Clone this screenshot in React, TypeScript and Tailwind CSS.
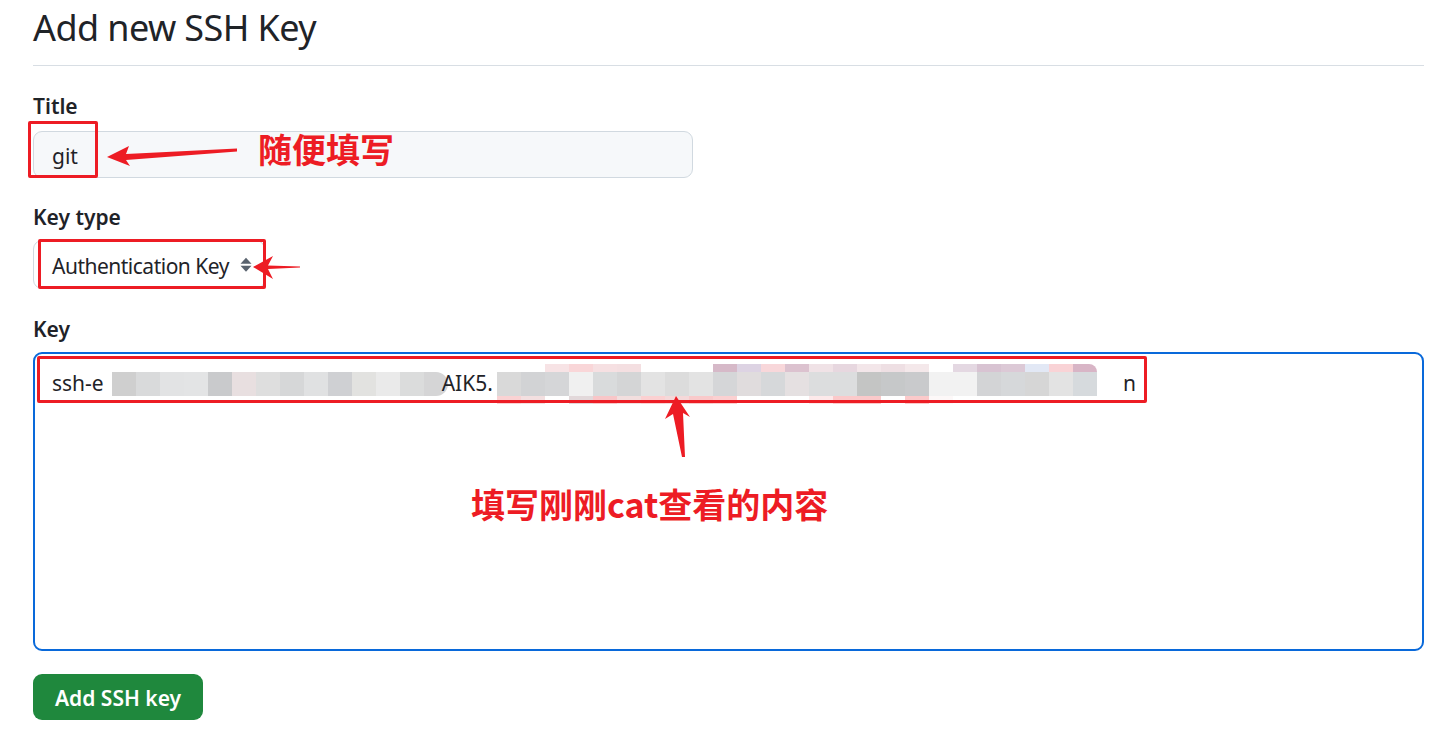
import React from "react";

const seg1 = [
  "bg-[#cfcfcf]",
  "bg-[#d9dadb]",
  "bg-[#e2e3e4]",
  "bg-[#e3e4e5]",
  "bg-[#c9cacc]",
  "bg-[#e8dfe0]",
  "bg-[#dedede]",
  "bg-[#d6d7d8]",
  "bg-[#e0e1e2]",
  "bg-[#cfd0d3]",
  "bg-[#e2e2e0]",
  "bg-[#eaeaea]",
  "bg-[#dbdcdc]",
  "bg-[#d5d5d6]",
];

const seg2 = [
  "bg-[#d9d9d9]",
  "bg-[#d2d3d5]",
  "bg-[#d5d6d8]",
  "bg-[#f0f0f0]",
  "bg-[#d9dbdc]",
  "bg-[#d4d5d6]",
  "bg-[#e3e3e3]",
  "bg-[#dcdcdc]",
  "bg-[#e3e3e3]",
  "bg-[#d5d6d8]",
  "bg-[#e0dcdd]",
  "bg-[#d6d8da]",
  "bg-[#e5e0e1]",
  "bg-[#dcddde]",
  "bg-[#dcddde]",
  "bg-[#c4c5c4]",
  "bg-[#c6c8c9]",
  "bg-[#c9cacc]",
  "bg-[#f2f2f2]",
  "bg-[#f2f2f2]",
  "bg-[#d3d4d6]",
  "bg-[#d6d8da]",
  "bg-[#d6d6d6]",
  "bg-[#e3e3e3]",
  "bg-[#d6dadd]",
];

const top2 = [
  "bg-transparent",
  "bg-transparent",
  "bg-[#f7e3e5]",
  "bg-[#f9d6d8]",
  "bg-[#f6e0e2]",
  "bg-[#f4dfe1]",
  "bg-transparent",
  "bg-transparent",
  "bg-transparent",
  "bg-[#d6b9c8]",
  "bg-[#ddd3e3]",
  "bg-[#f8d7da]",
  "bg-[#dcc2cf]",
  "bg-[#f0e2e6]",
  "bg-[#e7d7df]",
  "bg-[#f3e6e9]",
  "bg-[#eedfe3]",
  "bg-[#f4e8ea]",
  "bg-transparent",
  "bg-[#e4d8e2]",
  "bg-[#d8c3d2]",
  "bg-[#dcc9d6]",
  "bg-[#e2e8f5]",
  "bg-[#f9d3d6]",
  "bg-[#d8b5c6]",
];

const bottom2 = [
  "bg-[#fad2d3]",
  "bg-[#f3dfe0]",
  "bg-transparent",
  "bg-[#e2d8da]",
  "bg-[#f8c6c8]",
  "bg-[#f2dede]",
  "bg-[#fbd0d1]",
  "bg-[#f5d8d9]",
  "bg-[#f9c9ca]",
  "bg-[#fbd0d1]",
  "bg-transparent",
  "bg-transparent",
  "bg-transparent",
  "bg-[#fde9ea]",
  "bg-[#fbc9ca]",
  "bg-[#fbc9ca]",
  "bg-transparent",
  "bg-[#fbc9ca]",
  "bg-[#fdf8f8]",
  "bg-transparent",
  "bg-transparent",
  "bg-transparent",
  "bg-transparent",
  "bg-transparent",
  "bg-transparent",
];

const SortIcon = () => (
  <svg width="12" height="16" viewBox="0 0 12 16" className="ml-auto mr-[12px] -mt-[3px]">
    <path d="M0.5 6.8 L6 0.8 L11.5 6.8 Z" fill="#59636e" />
    <path d="M0.5 8.8 L6 14.8 L11.5 8.8 Z" fill="#59636e" />
  </svg>
);

const Mosaic = ({ cells, top, bottom }: { cells: string[]; top?: string[]; bottom?: string[] }) => (
  <div className="flex flex-col -my-[8px]">
    <div className="flex h-[8px] rounded-t-full overflow-hidden">
      {cells.map((_, i) => (
        <div key={i} className={`w-[24px] ${top ? top[i] : "bg-[#f3e4e6]"}`} />
      ))}
    </div>
    <div className="flex h-[24px]">
      {cells.map((c, i) => (
        <div key={i} className={`w-[24px] ${c}`} />
      ))}
    </div>
    <div className="flex h-[8px]">
      {cells.map((_, i) => (
        <div key={i} className={`w-[24px] ${bottom ? bottom[i] : "bg-[#f8e7e8]"}`} />
      ))}
    </div>
  </div>
);

const Annotations = () => (
  <>
    <div className="absolute left-[28px] top-[121px] w-[70px] h-[57px] border-[3px] border-[#ed1c24] rounded-[2px]" />
    <div className="absolute left-[38px] top-[239px] w-[228px] h-[50px] border-[3px] border-[#ed1c24] rounded-[2px]" />
    <div className="absolute left-[37px] top-[356px] w-[1110px] h-[47px] border-[3px] border-[#ed1c24] rounded-[2px]" />
    <svg className="absolute left-0 top-0 pointer-events-none" width="1454" height="735">
      <polygon points="107,157 129,146 126,154 237,148.5 237,151.5 126,160 130,166" fill="#ed1c24" />
      <polygon points="253,267 273,256 268,265.5 300,266.5 300,267.5 268,269 273,279" fill="#ed1c24" />
      <polygon points="676,396 690,417 683,413 685,457 682,457 673,414 665,419" fill="#ed1c24" />
    </svg>
    <div className="absolute left-[258px] top-[132px] text-[34px] leading-none font-bold text-[#ed1c24] font-['Microsoft_YaHei','Noto_Sans_CJK_SC',sans-serif]">
      随便填写
    </div>
    <div className="absolute left-[471px] top-[487px] text-[34px] leading-none font-bold text-[#ed1c24] font-['Microsoft_YaHei','Noto_Sans_CJK_SC',sans-serif]">
      填写刚刚cat查看的内容
    </div>
  </>
);

export default function App() {
  return (
    <div className="relative w-full min-h-screen bg-white overflow-hidden text-[#1f2328] font-['Noto_Sans','Noto_Sans_CJK_SC',sans-serif]">
      <div className="pl-[33px] pr-[30px]">
        <h1 className="text-[36px] leading-[54px] tracking-[-0.6px] font-normal pt-[1px] pb-[10px] border-b border-[#d8dee4]">
          Add new SSH Key
        </h1>

        <label className="block mt-[25px] text-[21px] leading-[31.5px] font-semibold">Title</label>
        <div className="mt-[8.5px] flex items-center h-[47px] w-[660px] rounded-[9px] border border-[#d1d9e0] bg-[#f6f8fa] pl-[18px] pt-[4px] text-[21px]">
          git
        </div>

        <label className="block mt-[24px] text-[21px] leading-[31.5px] font-semibold">Key type</label>
        <div className="mt-[6.5px] flex items-center h-[49px] w-[232px] rounded-[9px] border border-[#d1d9e0] bg-white pl-[18px] pt-[4px] text-[21px]">
          <span className="tracking-[-0.5px]">Authentication Key</span>
          <SortIcon />
        </div>

        <label className="block mt-[25px] text-[21px] leading-[31.5px] font-semibold">Key</label>
        <div className="mt-[6.5px] h-[299px] rounded-[9px] border-2 border-[#0969da] bg-white pl-[17px] pt-[14px] text-[21px]">
          <div className="flex items-center h-[31.5px] whitespace-nowrap">
            <span>ssh-e</span>
            <div className="ml-[8px] rounded-r-full overflow-hidden">
              <Mosaic cells={seg1} />
            </div>
            <span className="ml-[-6px]">AIK5.</span>
            <div className="ml-[4px]">
              <Mosaic cells={seg2} top={top2} bottom={bottom2} />
            </div>
            <span className="ml-[26px]">n</span>
          </div>
        </div>

        <button className="mt-[23px] h-[46px] w-[170px] rounded-[9px] bg-[#1f883d] text-white text-[21px] font-semibold pt-[4px]">
          Add SSH key
        </button>
      </div>
      <Annotations />
    </div>
  );
}
